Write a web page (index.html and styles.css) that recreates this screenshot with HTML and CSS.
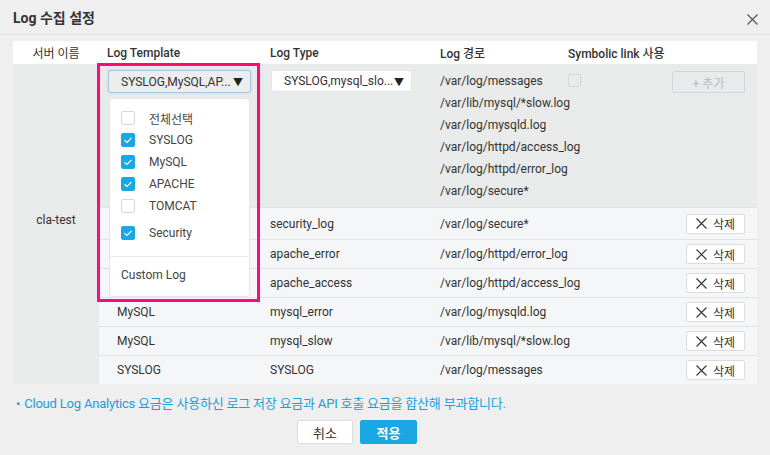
FILE: index.html
```html
<!DOCTYPE html>
<html lang="ko">
<head>
<meta charset="utf-8">
<link rel="stylesheet" href="styles.css">
</head>
<body>
<div class="dialog">
  <div class="header">
    <h1 class="title">Log 수집 설정</h1>
    <svg class="close" width="11" height="11" viewBox="0 0 11 11"><path d="M0.5 0.5L10.5 10.5M10.5 0.5L0.5 10.5" stroke="#555" stroke-width="1.2" fill="none"/></svg>
  </div>

  <div class="table">
    <div class="thead">
      <div class="th th-server">서버 이름</div>
      <div class="th">Log Template</div>
      <div class="th">Log Type</div>
      <div class="th">Log 경로</div>
      <div class="th">Symbolic link 사용</div>
      <div class="th"></div>
    </div>
    <div class="tbody">
      <div class="server">cla-test</div>
      <div class="rows">
        <div class="row row-edit">
          <div class="cell cell-template">
            <div class="select select-focus"><span>SYSLOG,MySQL,AP...</span><span class="caret">▼</span></div>
            <div class="highlight"></div>
            <div class="menu">
              <div class="opt"><span class="cb"></span><span>전체선택</span></div>
              <div class="opt"><span class="cb on"><svg width="14" height="14" viewBox="0 0 14 14"><path d="M3.5 7.2L6 9.5L10.5 4.8" stroke="#fff" stroke-width="1.1" fill="none"/></svg></span><span>SYSLOG</span></div>
              <div class="opt"><span class="cb on"><svg width="14" height="14" viewBox="0 0 14 14"><path d="M3.5 7.2L6 9.5L10.5 4.8" stroke="#fff" stroke-width="1.1" fill="none"/></svg></span><span>MySQL</span></div>
              <div class="opt"><span class="cb on"><svg width="14" height="14" viewBox="0 0 14 14"><path d="M3.5 7.2L6 9.5L10.5 4.8" stroke="#fff" stroke-width="1.1" fill="none"/></svg></span><span>APACHE</span></div>
              <div class="opt"><span class="cb"></span><span>TOMCAT</span></div>
              <div class="opt opt-gap"><span class="cb on"><svg width="14" height="14" viewBox="0 0 14 14"><path d="M3.5 7.2L6 9.5L10.5 4.8" stroke="#fff" stroke-width="1.1" fill="none"/></svg></span><span>Security</span></div>
              <div class="menu-custom">Custom Log</div>
            </div>
          </div>
          <div class="cell cell-type">
            <div class="select select-white"><span>SYSLOG,mysql_slo...</span><span class="caret">▼</span></div>
          </div>
          <div class="cell cell-paths">
            <div>/var/log/messages</div>
            <div>/var/lib/mysql/*slow.log</div>
            <div>/var/log/mysqld.log</div>
            <div>/var/log/httpd/access_log</div>
            <div>/var/log/httpd/error_log</div>
            <div>/var/log/secure*</div>
          </div>
          <div class="cell cell-sym"><span class="cb cb-disabled"></span></div>
          <div class="cell cell-action"><button class="btn-add">+ 추가</button></div>
        </div>

        <div class="row row-tall">
          <div class="cell pad-l"></div>
          <div class="cell">security_log</div>
          <div class="cell">/var/log/secure*</div>
          <div class="cell"></div>
          <div class="cell cell-action"><button class="btn-del"><svg width="11" height="11" viewBox="0 0 11 11"><path d="M0.5 0.5L10.5 10.5M10.5 0.5L0.5 10.5" stroke="#333" stroke-width="1.1" fill="none"/></svg>삭제</button></div>
        </div>
        <div class="row">
          <div class="cell pad-l"></div>
          <div class="cell">apache_error</div>
          <div class="cell">/var/log/httpd/error_log</div>
          <div class="cell"></div>
          <div class="cell cell-action"><button class="btn-del"><svg width="11" height="11" viewBox="0 0 11 11"><path d="M0.5 0.5L10.5 10.5M10.5 0.5L0.5 10.5" stroke="#333" stroke-width="1.1" fill="none"/></svg>삭제</button></div>
        </div>
        <div class="row">
          <div class="cell pad-l"></div>
          <div class="cell">apache_access</div>
          <div class="cell">/var/log/httpd/access_log</div>
          <div class="cell"></div>
          <div class="cell cell-action"><button class="btn-del"><svg width="11" height="11" viewBox="0 0 11 11"><path d="M0.5 0.5L10.5 10.5M10.5 0.5L0.5 10.5" stroke="#333" stroke-width="1.1" fill="none"/></svg>삭제</button></div>
        </div>
        <div class="row">
          <div class="cell pad-l">MySQL</div>
          <div class="cell">mysql_error</div>
          <div class="cell">/var/log/mysqld.log</div>
          <div class="cell"></div>
          <div class="cell cell-action"><button class="btn-del"><svg width="11" height="11" viewBox="0 0 11 11"><path d="M0.5 0.5L10.5 10.5M10.5 0.5L0.5 10.5" stroke="#333" stroke-width="1.1" fill="none"/></svg>삭제</button></div>
        </div>
        <div class="row">
          <div class="cell pad-l">MySQL</div>
          <div class="cell">mysql_slow</div>
          <div class="cell">/var/lib/mysql/*slow.log</div>
          <div class="cell"></div>
          <div class="cell cell-action"><button class="btn-del"><svg width="11" height="11" viewBox="0 0 11 11"><path d="M0.5 0.5L10.5 10.5M10.5 0.5L0.5 10.5" stroke="#333" stroke-width="1.1" fill="none"/></svg>삭제</button></div>
        </div>
        <div class="row">
          <div class="cell pad-l">SYSLOG</div>
          <div class="cell">SYSLOG</div>
          <div class="cell">/var/log/messages</div>
          <div class="cell"></div>
          <div class="cell cell-action"><button class="btn-del"><svg width="11" height="11" viewBox="0 0 11 11"><path d="M0.5 0.5L10.5 10.5M10.5 0.5L0.5 10.5" stroke="#333" stroke-width="1.1" fill="none"/></svg>삭제</button></div>
        </div>
      </div>
    </div>
  </div>

  <p class="note"><span class="dot">•</span>Cloud Log Analytics 요금은 사용하신 로그 저장 요금과 API 호출 요금을 합산해 부과합니다.</p>

  <div class="footer">
    <button class="btn btn-cancel">취소</button>
    <button class="btn btn-ok">적용</button>
  </div>
</div>
</body>
</html>
```

FILE: styles.css
```css
* { box-sizing: border-box; }
html, body { margin: 0; padding: 0; }
body {
  background: #efefef;
  font-family: Roboto, "Noto Sans CJK KR", sans-serif;
  font-size: 12px;
  color: #333;
  width: 770px;
  height: 455px;
  overflow: hidden;
}
.dialog { width: 770px; }
.header {
  height: 35px;
  padding: 0 12px 0 13px;
  border-bottom: 1px solid #e0e0e0;
  display: flex;
  align-items: center;
  justify-content: space-between;
}
.title {
  margin: 0;
  font-size: 14px;
  font-weight: 700;
  color: #333;
}
.close { margin-top: 5px; }

.table {
  margin: 6px 13px 0;
  width: 744px;
}
.thead {
  display: grid;
  grid-template-columns: 86px 163px 170px 128px 90px 107px;
  height: 23px;
  background: #fff;
  align-items: center;
}
.th {
  font-weight: 500;
  padding-left: 8px;
  color: #333;
  white-space: nowrap;
}
.th-server { text-align: center; padding-left: 0; font-weight: 400; }

.tbody {
  display: grid;
  grid-template-columns: 86px 1fr;
}
.server {
  background: #e9eaea;
  display: flex;
  align-items: center;
  justify-content: center;
  padding-bottom: 8px;
}
.rows { display: flex; flex-direction: column; }
.row {
  display: grid;
  grid-template-columns: 163px 170px 128px 90px 95px;
  height: 29px;
  align-items: center;
  background: #f5f6f8;
  border-top: 1px solid #e2e3e5;
}
.row-tall { height: 32px; }
.cell { padding-left: 8px; white-space: nowrap; }
.pad-l { padding-left: 18px; }

.row-edit {
  height: 143px;
  background: #e9eaea;
  border-top: 0;
  align-items: start;
}
.cell-template { position: relative; height: 100%; padding: 6px 0 0 9px; }
.cell-type { padding: 6px 0 0 9px; }
.cell-paths { padding: 6px 0 0 8px; line-height: 22px; }
.cell-sym { padding: 10px 0 0 8px; }
.cell-action { display: flex; justify-content: flex-end; padding-left: 0; }
.row-edit .cell-action { padding-top: 7px; }

.select {
  width: 143px;
  height: 23px;
  border-radius: 3px;
  display: flex;
  align-items: center;
  justify-content: space-between;
  padding: 0 7px 0 12px;
  font-size: 12px;
}
.select-focus {
  background: #eceded;
  border: 1px solid #a8c9e4;
  box-shadow: 0 0 2px rgba(120,170,215,0.5);
}
.select-white {
  width: 141px;
  height: 22px;
  background: #fff;
  border: 1px solid #e6e6e6;
}
.caret { font-size: 10px; color: #222; }

.highlight {
  position: absolute;
  left: -2px;
  top: -1px;
  width: 163px;
  height: 239px;
  border: 3px solid #ff0a78;
  pointer-events: none;
  z-index: 2;
}
.menu {
  position: absolute;
  left: 10px;
  top: 34px;
  width: 141px;
  height: 199px;
  background: #fff;
  border: 1px solid #e6e6e6;
  border-radius: 3px;
  padding-top: 8px;
  z-index: 1;
}
.opt {
  height: 22px;
  display: flex;
  align-items: center;
  padding-left: 11px;
  gap: 14px;
  color: #444;
}
.opt-gap { margin-top: 5px; }
.cb {
  width: 14px;
  height: 14px;
  border: 1px solid #d6d6d6;
  border-radius: 2px;
  background: #fff;
  display: inline-block;
  flex: none;
}
.cb.on {
  background: #1ba7e6;
  border-color: #1ba7e6;
  position: relative;
}
.cb.on svg { position: absolute; left: -1px; top: -1px; }
.cb-disabled { width: 13px; height: 13px; background: transparent; border-color: #d8d8d8; }
.menu-custom {
  margin-top: 12px;
  border-top: 1px solid #e8e8e8;
  padding: 11px 0 0 11px;
  color: #444;
}

.btn-add {
  width: 73px;
  height: 22px;
  background: transparent;
  border: 1px solid #cfd6dc;
  border-radius: 2px;
  color: #b8bcc0;
  font-family: Roboto, "Noto Sans CJK KR", sans-serif;
  font-size: 12px;
}
.btn-del {
  width: 59px;
  height: 20px;
  background: #fff;
  border: 1px solid #dcdcdc;
  border-radius: 2px;
  color: #333;
  font-family: Roboto, "Noto Sans CJK KR", sans-serif;
  font-size: 12px;
  display: flex;
  align-items: center;
  justify-content: center;
  gap: 6px;
  padding: 0;
}

.note {
  margin: 9px 0 0 16px;
  color: #1a9fdb;
  font-size: 13px;
  letter-spacing: -0.2px;
}
.dot { margin-right: 4px; }

.footer {
  display: flex;
  gap: 7px;
  padding-left: 297px;
  margin-top: 8px;
}
.btn {
  height: 24px;
  border-radius: 2px;
  font-family: Roboto, "Noto Sans CJK KR", sans-serif;
  font-size: 13px;
  padding: 0;
}
.btn-cancel {
  width: 56px;
  background: #fff;
  border: 1px solid #dcdcdc;
  color: #333;
}
.btn-ok {
  width: 57px;
  background: #1aa7e3;
  border: 1px solid #1aa7e3;
  color: #fff;
  font-weight: 700;
}
```
